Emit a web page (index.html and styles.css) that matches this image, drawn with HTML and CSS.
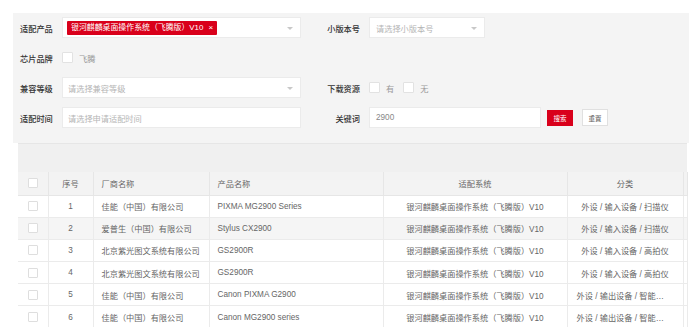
FILE: index.html
```html
<!DOCTYPE html>
<html lang="zh-CN">
<head>
<meta charset="utf-8">
<link rel="stylesheet" href="styles.css">
</head>
<body>
<div class="page">
  <div class="filters">
    <div class="frow">
      <span class="lbl">适配产品</span>
      <div class="field wide"><span class="tag">银河麒麟桌面操作系统（飞腾版）V10<span class="x">×</span></span><span class="arrow"></span></div>
      <span class="lbl2">小版本号</span>
      <div class="field narrow"><span class="ph">请选择小版本号</span><span class="arrow"></span></div>
    </div>
    <div class="frow">
      <span class="lbl">芯片品牌</span>
      <span class="cb"></span><span class="cbt">飞腾</span>
    </div>
    <div class="frow">
      <span class="lbl">兼容等级</span>
      <div class="field wide"><span class="ph">请选择兼容等级</span><span class="arrow"></span></div>
      <span class="lbl2">下载资源</span>
      <span class="cb"></span><span class="cbt">有</span>
      <span class="cb gap"></span><span class="cbt">无</span>
    </div>
    <div class="frow">
      <span class="lbl">适配时间</span>
      <div class="field wide"><span class="ph">请选择申请适配时间</span></div>
      <span class="lbl2">关键词</span>
      <div class="field kw"><span class="val">2900</span></div>
      <span class="btn primary">搜索</span>
      <span class="btn">重置</span>
    </div>
  </div>
  <div class="tablebox">
    <div class="toolbar"></div>
    <table class="grid">
      <colgroup>
        <col class="c-cb"><col class="c-no"><col class="c-vendor"><col class="c-prod"><col class="c-sys"><col class="c-cat"><col class="c-rest">
      </colgroup>
      <thead>
        <tr><th><span class="tcb"></span></th><th>序号</th><th class="l">厂商名称</th><th class="l">产品名称</th><th>适配系统</th><th>分类</th><th></th></tr>
      </thead>
      <tbody>
        <tr><td><span class="tcb"></span></td><td>1</td><td class="l">佳能（中国）有限公司</td><td class="l">PIXMA MG2900 Series</td><td>银河麒麟桌面操作系统（飞腾版）V10</td><td>外设 / 输入设备 / 扫描仪</td><td></td></tr>
        <tr class="alt"><td><span class="tcb"></span></td><td>2</td><td class="l">爱普生（中国）有限公司</td><td class="l">Stylus CX2900</td><td>银河麒麟桌面操作系统（飞腾版）V10</td><td>外设 / 输入设备 / 扫描仪</td><td></td></tr>
        <tr><td><span class="tcb"></span></td><td>3</td><td class="l">北京紫光图文系统有限公司</td><td class="l">GS2900R</td><td>银河麒麟桌面操作系统（飞腾版）V10</td><td>外设 / 输入设备 / 高拍仪</td><td></td></tr>
        <tr><td><span class="tcb"></span></td><td>4</td><td class="l">北京紫光图文系统有限公司</td><td class="l">GS2900R</td><td>银河麒麟桌面操作系统（飞腾版）V10</td><td>外设 / 输入设备 / 高拍仪</td><td></td></tr>
        <tr><td><span class="tcb"></span></td><td>5</td><td class="l">佳能（中国）有限公司</td><td class="l">Canon PIXMA G2900</td><td>银河麒麟桌面操作系统（飞腾版）V10</td><td class="ell">外设 / 输出设备 / 智能打印机</td><td></td></tr>
        <tr><td><span class="tcb"></span></td><td>6</td><td class="l">佳能（中国）有限公司</td><td class="l">Canon MG2900 series</td><td>银河麒麟桌面操作系统（飞腾版）V10</td><td class="ell">外设 / 输出设备 / 智能打印机</td><td></td></tr>
      </tbody>
    </table>
  </div>
</div>
</body>
</html>
```
FILE: styles.css
```css
* { box-sizing: border-box; }
html, body { margin: 0; padding: 0; background: #fff; }
body {
  font-family: "Liberation Sans", "Noto Sans CJK SC", sans-serif;
  font-size: 8.2px;
  color: #333;
  overflow: hidden;
  height: 327px;
}
.page { padding: 13px 7px 0 13px; }
.filters {
  background: #f4f4f4;
  padding: 4px 0 15px 7px;
  display: flex;
  flex-direction: column;
  gap: 9px;
}
.frow { display: flex; align-items: center; height: 21px; }
.lbl { width: 42px; color: #333; font-weight: 500; }
.lbl2 { width: 68px; text-align: right; padding-right: 9px; color: #333; font-weight: 500; }
.field {
  height: 21px;
  background: #fff;
  border: 1px solid #ebebeb;
  display: flex;
  align-items: center;
  position: relative;
  padding-left: 4px;
}
.wide { width: 239px; }
.narrow { width: 116px; padding-left: 6px; }
.kw { width: 172px; padding-left: 6px; }
.ph { color: #b5b5b5; }
.wide .ph { padding-left: 1px; }
.val { color: #888; }
.tag {
  background: #d9001b;
  color: #fff;
  height: 14px;
  line-height: 14px;
  padding: 0 4px 0 4px;
  border-radius: 1px;
  white-space: nowrap;
  font-size: 7.9px;
}
.tag .x { margin-left: 5px; font-size: 8px; }
.arrow {
  position: absolute;
  right: 7px;
  top: 9px;
  width: 0; height: 0;
  border-left: 3px solid transparent;
  border-right: 3px solid transparent;
  border-top: 3px solid #c8c8c8;
}
.cb {
  width: 11px; height: 11px;
  background: #fff;
  border: 1px solid #e2e2e2;
  border-radius: 1px;
}
.cb.gap { margin-left: 9px; }
.cbt { margin-left: 6px; color: #999; }
.btn {
  height: 17px;
  width: 26px;
  display: inline-flex;
  align-items: center;
  justify-content: center;
  font-size: 6.5px;
  background: #fff;
  border: 1px solid #e0e0e0;
  color: #555;
  margin-left: 9px;
}
.btn.primary {
  background: #d9001b;
  border-color: #d9001b;
  color: #fff;
  margin-left: 6px;
  height: 16px;
}
.tablebox { margin-left: 5px; width: 669px; }
.toolbar { height: 29px; background: #f0f0f0; border-top: 1px solid #e6e6e6; }
.grid {
  width: 669px;
  table-layout: fixed;
  border-collapse: collapse;
  color: #666;
}
.c-cb { width: 30px; }
.c-no { width: 45px; }
.c-vendor { width: 116px; }
.c-prod { width: 174px; }
.c-sys { width: 184px; }
.c-cat { width: 116px; }
.c-rest { width: 4px; }
.grid th, .grid td {
  border: 1px solid #ebebeb;
  border-top: none;
  text-align: center;
  font-weight: normal;
  padding: 0;
  white-space: nowrap;
  overflow: hidden;
}
.grid th { height: 23px; background: #f3f3f3; color: #666; border-color: #e6e6e6; }
.grid td { height: 22.2px; background: #fff; }
.grid tr.alt td { background: #f5f5f5; }
.grid .l { text-align: left; padding-left: 8px; }
.grid td.ell { text-overflow: ellipsis; text-align: left; padding: 0 11px 0 9px; }
.grid th:first-child, .grid td:first-child { border-left: none; }
.tcb {
  display: inline-block;
  width: 10px; height: 10px;
  background: #fff;
  border: 1px solid #dedede;
  border-radius: 1px;
  vertical-align: middle;
}
```
